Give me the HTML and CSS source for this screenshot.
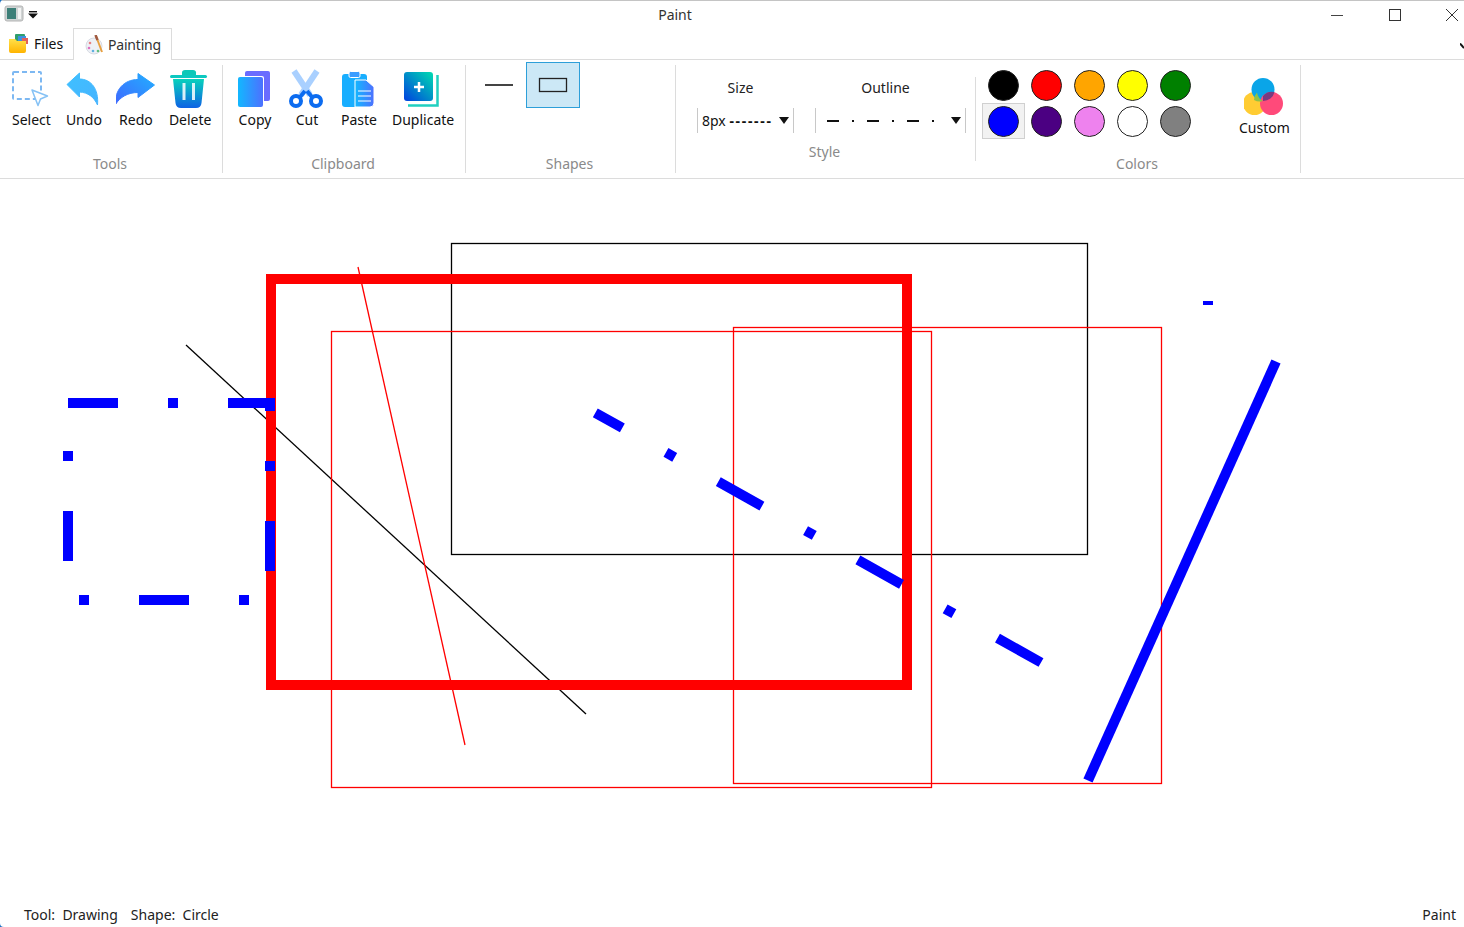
FILE: index.html

```html
<!DOCTYPE html>
<html lang="en">
<head>
  <meta charset="UTF-8" />
  <title>Paint</title>
  <link rel="stylesheet" href="styles.css">
</head>
<body>
  <svg class="defs" width="0" height="0">
    <defs>
      <linearGradient id="gradUndo" x1="0" y1="0" x2="1" y2="1"><stop offset="0" stop-color="#3fc0ff"/><stop offset="1" stop-color="#46b4ff"/></linearGradient>
      <linearGradient id="gradRedo" x1="0" y1="1" x2="1" y2="0"><stop offset="0" stop-color="#3f68ff"/><stop offset="1" stop-color="#22b0ff"/></linearGradient>
      <linearGradient id="gradBin" x1="0" y1="0" x2="0" y2="1"><stop offset="0" stop-color="#08d2bc"/><stop offset="1" stop-color="#0e62e4"/></linearGradient>
      <linearGradient id="gradSheet" x1="0" y1="0" x2="1" y2="0"><stop offset="0" stop-color="#12b8ff"/><stop offset="1" stop-color="#4d70ff"/></linearGradient>
      <linearGradient id="gradDup" x1="0" y1="1" x2="1" y2="0"><stop offset="0" stop-color="#0040e0"/><stop offset="1" stop-color="#00dcb0"/></linearGradient>
      <linearGradient id="gradFolder" x1="0" y1="0" x2="0" y2="1"><stop offset="0" stop-color="#ffe04a"/><stop offset="1" stop-color="#ffb400"/></linearGradient>
    </defs>
  </svg>

  <div class="app">
    <header class="titlebar">
      <div class="title-left">
        <svg width="20" height="20" viewBox="4 4 20 20">
          <rect x="5" y="5" width="18" height="15" rx="2" fill="#d0d4d4" stroke="#b4b4b4"/>
          <rect x="7" y="7" width="9" height="11" fill="#3d7f78"/>
          <rect x="18" y="7" width="3" height="11" fill="#f4f4f4"/>
        </svg>
        <svg width="10" height="8" viewBox="28 9 10 8">
          <rect x="29" y="9" width="8" height="1.4" fill="#111"/>
          <polygon points="28,11.5 38,11.5 33,16.5" fill="#111"/>
        </svg>
      </div>
      <div class="title-text">Paint</div>
      <div class="win-controls">
        <svg width="12" height="12" viewBox="0 0 12 12"><path d="M0 6.5H12" stroke="#444" fill="none"/></svg>
        <svg width="12" height="12" viewBox="0 0 12 12"><rect x="0.5" y="0.5" width="11" height="11" stroke="#333" fill="none"/></svg>
        <svg width="12" height="12" viewBox="0 0 12 12"><path d="M0 0L12 12M12 0L0 12" stroke="#333" fill="none"/></svg>
      </div>
    </header>

    <nav class="tabs">
      <div class="tab">
        <svg width="19" height="20" viewBox="9 34 19 20">
          <rect x="15" y="34" width="10" height="10" rx="1" fill="#2f9e6e"/>
          <rect x="18" y="36" width="8" height="9" fill="#3d8fe0"/>
          <rect x="22" y="38" width="6" height="6" fill="#e0605a"/>
          <path d="M9 39 h6 l2 2 h9 v10 a2 2 0 0 1 -2 2 h-13 a2 2 0 0 1 -2 -2z" fill="url(#gradFolder)"/>
        </svg>
        Files
      </div>
      <div class="tab tab-active">
        <svg width="19" height="20" viewBox="84 34 19 20">
          <circle cx="93" cy="45" r="8" fill="#eef1f6" stroke="#d6dae2"/>
          <circle cx="89" cy="42" r="1.3" fill="#e88080"/>
          <circle cx="88" cy="47" r="1.3" fill="#e070c0"/>
          <circle cx="92" cy="50" r="1.3" fill="#60b0e0"/>
          <circle cx="97" cy="50" r="1.3" fill="#60c080"/>
          <path d="M95 35 L101 51" stroke="#e8a040" stroke-width="2" fill="none"/>
          <path d="M94.5 34 L96.5 39" stroke="#a05a40" stroke-width="2.5" fill="none"/>
        </svg>
        Painting
      </div>
      <svg class="tabs-chevron" width="4" height="6" viewBox="0 0 4 6"><path d="M0 0.5 L4 5" stroke="#111" stroke-width="2" fill="none"/></svg>
    </nav>

    <section class="ribbon">
      <div class="group group-tools">
        <div class="tools">
          <div class="tool">
            <svg width="40" height="40" viewBox="11 68 40 40">
              <rect x="13" y="72" width="28" height="27" rx="1" fill="none" stroke="#7db8f2" stroke-width="2" stroke-dasharray="5 3"/>
              <path d="M32 90 L47.5 96 L40.5 99 L38 105.5Z" fill="#fff" stroke="#86c2f5" stroke-width="1.5" stroke-linejoin="round"/>
            </svg>
            <span>Select</span>
          </div>
          <div class="tool">
            <svg width="40" height="40" viewBox="64 68 40 40">
              <path d="M67 84.5 L79.5 73 V79 C91 79 99 89 97.5 105 C94 97 88 92.5 79.5 92 V97Z" fill="url(#gradUndo)" stroke="url(#gradUndo)" stroke-linejoin="round"/>
            </svg>
            <span>Undo</span>
          </div>
          <div class="tool">
            <svg width="40" height="40" viewBox="116 68 40 40">
              <path d="M154.5 85 L138 73.5 V79.5 C124 79.5 114.5 90 115.5 104.5 C120 97 128 92.5 138 92.5 V97.5Z" fill="url(#gradRedo)" stroke="url(#gradRedo)" stroke-linejoin="round"/>
            </svg>
            <span>Redo</span>
          </div>
          <div class="tool">
            <svg width="40" height="40" viewBox="170 68 40 40">
              <path d="M182 75 V72.5 Q182 70 185 70 H193 Q196 70 196 72.5 V75Z" fill="#0cc8b8"/>
              <rect x="170" y="75" width="37" height="3" rx="1.5" fill="#0cc8c0"/>
              <path d="M173 79 H204 L201.5 103 Q201 108 196 108 H181 Q176 108 175.5 103Z" fill="url(#gradBin)"/>
              <rect x="182.5" y="83" width="3" height="17" fill="#fff" opacity="0.85"/>
              <rect x="192" y="83" width="3" height="17" fill="#fff" opacity="0.85"/>
            </svg>
            <span>Delete</span>
          </div>
        </div>
        <div class="group-label">Tools</div>
      </div>

      <div class="group group-clipboard">
        <div class="tools">
          <div class="tool">
            <svg width="40" height="40" viewBox="235 68 40 40">
              <rect x="245" y="71" width="25" height="30" rx="2" fill="#6a6cff"/>
              <rect x="237" y="76" width="27" height="32" rx="2" fill="#fff"/>
              <rect x="238" y="77" width="25" height="30" rx="2" fill="url(#gradSheet)"/>
            </svg>
            <span>Copy</span>
          </div>
          <div class="tool">
            <svg width="40" height="40" viewBox="287 68 40 40">
              <path d="M294 71 L310 95" stroke="#a9d0ff" stroke-width="6" fill="none"/>
              <path d="M317 71 L301 95" stroke="#a9d0ff" stroke-width="6" fill="none"/>
              <circle cx="296" cy="101" r="5" fill="none" stroke="#0c6cf0" stroke-width="4"/>
              <circle cx="316" cy="101" r="5" fill="none" stroke="#0c6cf0" stroke-width="4"/>
              <path d="M300 97 L305 91 M312 97 L307 91" stroke="#0c6cf0" stroke-width="4" fill="none"/>
            </svg>
            <span>Cut</span>
          </div>
          <div class="tool">
            <svg width="40" height="40" viewBox="339 68 40 40">
              <rect x="342" y="74" width="25" height="33" rx="3" fill="#18aeff"/>
              <rect x="349" y="71.5" width="11" height="6" rx="1.5" fill="#3a9cff" stroke="#fff"/>
              <path d="M355 80 H366 L374 87 V103 Q374 107 370 107 H355 Z" fill="url(#gradSheet)" stroke="#fff"/>
              <path d="M358 91 H371 M358 96 H371 M358 101 H371" stroke="#fff" fill="none"/>
            </svg>
            <span>Paste</span>
          </div>
          <div class="tool">
            <svg width="40" height="40" viewBox="403 68 40 40">
              <rect x="404" y="72" width="29" height="29" rx="3" fill="url(#gradDup)"/>
              <path d="M419 82 V92 M414 87 H424" stroke="#fff" stroke-width="2.5" fill="none"/>
              <path d="M437.5 75 V105.5 H408" stroke="#20d0c0" stroke-width="2.5" fill="none"/>
            </svg>
            <span>Duplicate</span>
          </div>
        </div>
        <div class="group-label">Clipboard</div>
      </div>

      <div class="group group-shapes">
        <div class="shapes">
          <div class="shape-btn">
            <svg width="30" height="4" viewBox="0 0 30 4"><path d="M1 2H29" stroke="#444" stroke-width="2" fill="none"/></svg>
          </div>
          <div class="shape-btn shape-btn-active">
            <svg width="30" height="16" viewBox="0 0 30 16"><rect x="1.5" y="1.5" width="27" height="13" fill="none" stroke="#222" stroke-width="1.3"/></svg>
          </div>
        </div>
        <div class="group-label">Shapes</div>
      </div>

      <div class="group group-style">
        <div class="style-inner">
          <div class="style-cols">
            <div class="style-col style-col-size">
              <div class="style-name">Size</div>
              <div class="select select-size">
                <span>8px <b class="dashes">-------</b></span>
                <svg width="10" height="7" viewBox="0 0 10 7"><polygon points="0,0 10,0 5,7" fill="#111"/></svg>
              </div>
            </div>
            <div class="style-col style-col-outline">
              <div class="style-name">Outline</div>
              <div class="select select-outline">
                <svg width="108" height="4" viewBox="0 0 108 4"><path d="M0 2H12 M25 2H27 M40 2H52 M65 2H67 M80 2H92 M105 2H107" stroke="#111" stroke-width="2" fill="none"/></svg>
                <svg width="10" height="7" viewBox="0 0 10 7"><polygon points="0,0 10,0 5,7" fill="#111"/></svg>
              </div>
            </div>
          </div>
          <div class="group-label">Style</div>
        </div>
      </div>

      <div class="group group-colors">
        <div class="colors-row">
          <div class="swatches">
            <div class="swatch"><i class="dot dot-black"></i></div>
            <div class="swatch"><i class="dot dot-red"></i></div>
            <div class="swatch"><i class="dot dot-orange"></i></div>
            <div class="swatch"><i class="dot dot-yellow"></i></div>
            <div class="swatch"><i class="dot dot-green"></i></div>
            <div class="swatch swatch-active"><i class="dot dot-blue"></i></div>
            <div class="swatch"><i class="dot dot-indigo"></i></div>
            <div class="swatch"><i class="dot dot-violet"></i></div>
            <div class="swatch"><i class="dot dot-white"></i></div>
            <div class="swatch"><i class="dot dot-gray"></i></div>
          </div>
          <div class="tool tool-custom">
            <svg width="40" height="40" viewBox="1244 76 40 40">
              <circle cx="1254.5" cy="103.5" r="11.5" fill="#ffcc33"/>
              <circle cx="1263" cy="89.5" r="11.5" fill="#0aa5e8"/>
              <circle cx="1271.5" cy="103.5" r="11.5" fill="#ff4a7a"/>
              <path d="M1257 92.5 A11.5 11.5 0 0 0 1254 100 A11.5 11.5 0 0 0 1263 101 A11.5 11.5 0 0 1 1257 92.5Z" fill="#8cc24a"/>
              <path d="M1263 101 A11.5 11.5 0 0 0 1274.5 92 A11.5 11.5 0 0 0 1263 96Z" fill="#7a3a80"/>
            </svg>
            <span>Custom</span>
          </div>
        </div>
        <div class="group-label">Colors</div>
      </div>
    </section>

    <main class="canvas">
      <svg width="1464" height="723" viewBox="0 179 1464 723">
        <rect x="451.5" y="243.5" width="636" height="311" fill="none" stroke="#000" stroke-width="1.3"/>
        <line x1="186" y1="345" x2="586" y2="714" stroke="#000" stroke-width="1.3"/>
        <rect x="271" y="279" width="636" height="406" fill="none" stroke="#f00" stroke-width="10"/>
        <line x1="358" y1="267" x2="465" y2="745" stroke="#f00" stroke-width="1.3"/>
        <rect x="331.5" y="331.5" width="600" height="456" fill="none" stroke="#f00" stroke-width="1.3"/>
        <rect x="733.5" y="327.5" width="428" height="456" fill="none" stroke="#f00" stroke-width="1.3"/>
        <rect x="68" y="403" width="202" height="197" fill="none" stroke="#00f" stroke-width="10" stroke-dasharray="50 50 10 50"/>
        <line x1="595.3" y1="412.8" x2="1041" y2="662.5" stroke="#00f" stroke-width="10" stroke-dasharray="50 50 10 50" stroke-dashoffset="19"/>
        <line x1="1088" y1="780.5" x2="1276" y2="361.5" stroke="#00f" stroke-width="10"/>
        <rect x="1203" y="301" width="10" height="4" fill="#00f"/>
      </svg>
    </main>

    <footer class="statusbar">
      <div class="status-left">
        <span>Tool:&nbsp; Drawing</span>
        <span>Shape:&nbsp; Circle</span>
      </div>
      <span>Paint</span>
    </footer>
  </div>
</body>
</html>
```

FILE: styles.css

```css
* {
  box-sizing: border-box;
}
html {
  background: #1a6fc4;
}
body {
  margin: 0;
  font-family: 'Noto Sans', sans-serif;
  font-size: 14px;
  color: #111;
}
svg {
  display: block;
  flex-shrink: 0;
}
.defs {
  position: absolute;
}
.app {
  width: 1464px;
  height: 927px;
  background: white;
  border-radius: 4px 0 0 4px;
  display: flex;
  flex-direction: column;
  overflow: hidden;
}

/* title bar */
.titlebar {
  height: 28px;
  border-top: 1px solid #c4c4c4;
  display: flex;
  align-items: center;
}
.title-left {
  width: 40px;
  display: flex;
  align-items: center;
  gap: 4px;
  padding-left: 4px;
}
.title-text {
  flex: 1;
  text-align: center;
  color: #333;
}
.win-controls {
  width: 154px;
  display: flex;
  gap: 45.5px;
  padding-left: 21px;
}

/* tabs */
.tabs {
  height: 32px;
  border-bottom: 1px solid #dcdcdc;
  display: flex;
  align-items: stretch;
  padding-left: 9px;
  position: relative;
}
.tab {
  display: flex;
  align-items: center;
  gap: 6px;
  width: 64px;
}
.tab-active {
  width: 99px;
  padding-left: 11px;
  gap: 4px;
  letter-spacing: -0.2px;
  background: white;
  border: 1px solid #dcdcdc;
  border-bottom: none;
  height: 32px;
  color: #333;
}
.tabs-chevron {
  margin-left: auto;
  align-self: center;
  margin-top: 4px;
}

/* ribbon */
.ribbon {
  height: 119px;
  border-bottom: 1px solid #dcdcdc;
  padding: 5px 0;
  display: flex;
}
.group {
  height: 108px;
  border-right: 1px solid #dcdcdc;
  display: flex;
  flex-direction: column;
  justify-content: space-between;
}
.group-tools {
  width: 223px;
}
.group-tools .tools {
  padding-left: 5px;
}
.group-clipboard {
  width: 243px;
}
.group-clipboard .tools {
  padding-left: 6px;
}
.group-shapes {
  width: 210px;
}
.group-style {
  width: 300px;
  border-right: none;
  padding-top: 12px;
  display: block;
}
.group-colors {
  width: 325px;
}
.group-label {
  height: 19px;
  line-height: 19px;
  text-align: center;
  padding-right: 2px;
  color: #8a8a8a;
}
.tools {
  display: flex;
  height: 64px;
}
.tool {
  min-width: 52px;
  padding: 3px 7px 0;
  display: flex;
  flex-direction: column;
  align-items: center;
}
.tool svg {
  margin: 0 -2px;
}
.tool span {
  line-height: 19px;
  margin-top: 2px;
  white-space: nowrap;
}

/* shapes */
.shapes {
  display: flex;
  margin-top: -3px;
  padding-left: 6px;
}
.shape-btn {
  width: 54px;
  height: 46px;
  display: flex;
  align-items: center;
  justify-content: center;
}
.shape-btn-active {
  background: #cce8f6;
  border: 1px solid #2d9fd9;
}

/* style */
.style-inner {
  height: 84px;
  border-right: 1px solid #dcdcdc;
  display: flex;
  flex-direction: column;
  justify-content: space-between;
}
.style-cols {
  display: flex;
  padding: 1px 0 0 21px;
  gap: 21px;
}
.style-col {
  display: flex;
  flex-direction: column;
  gap: 11px;
}
.style-col-size {
  width: 97px;
}
.style-col-outline {
  width: 151px;
}
.style-name {
  height: 19px;
  line-height: 19px;
  text-align: center;
  padding-right: 10px;
  color: #222;
}
.select {
  height: 25px;
  border-left: 1px solid #c8c8c8;
  border-right: 1px solid #c8c8c8;
  display: flex;
  align-items: center;
  justify-content: space-between;
  white-space: nowrap;
}
.select-size {
  padding: 0 4px;
}
.select-outline {
  padding: 0 4px 0 11px;
}
.dashes {
  letter-spacing: 1.7px;
}

/* colours */
.colors-row {
  display: flex;
  padding-left: 6px;
}
.swatches {
  display: grid;
  grid-template-columns: repeat(5, 43px);
  grid-template-rows: repeat(2, 36px);
  margin-top: 2px;
}
.swatch {
  display: flex;
  align-items: center;
  justify-content: center;
}
.swatch-active {
  background: #f2f2f2;
  border: 1px solid #d0d0d0;
}
.dot {
  width: 31px;
  height: 31px;
  border-radius: 50%;
  border: 1px solid #222;
}
.dot-black { background: black; }
.dot-red { background: red; }
.dot-orange { background: orange; }
.dot-yellow { background: yellow; }
.dot-green { background: green; }
.dot-blue { background: blue; }
.dot-indigo { background: indigo; }
.dot-violet { background: violet; }
.dot-white { background: white; }
.dot-gray { background: gray; }
.tool-custom {
  margin-left: 35px;
  padding-top: 11px;
}

/* canvas */
.canvas {
  flex: 1;
  min-height: 0;
}

/* status */
.statusbar {
  height: 25px;
  display: flex;
  justify-content: space-between;
  padding: 0 8px 0 24px;
  line-height: 25px;
  color: #222;
}
.status-left {
  display: flex;
  gap: 13px;
}
```
